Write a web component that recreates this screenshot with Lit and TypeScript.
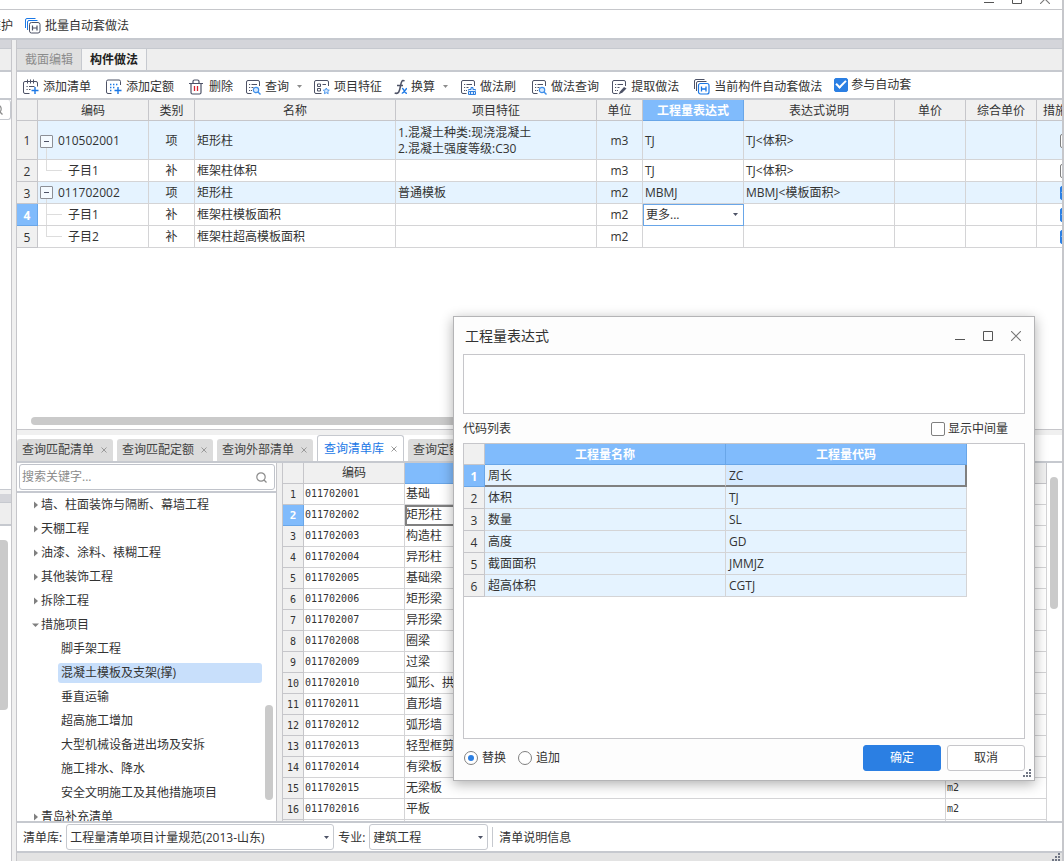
import { LitElement, html, svg, css, nothing } from "lit";
import { customElement, property, state } from "lit/decorators.js";
import { classMap } from "lit/directives/class-map.js";

const DARK = "#4d5266";
const BLUE = "#1b78e6";

const frame = svg`<path d="M6.5 14.5H3A1.5 1.5 0 0 1 1.5 13V3A1.5 1.5 0 0 1 3 1.5H13A1.5 1.5 0 0 1 14.5 3V7" fill="none" stroke=${DARK}/>`;
const lines = svg`<path d="M4 5.5H5.2M6.5 5.5H12M4 8.5H5.2M6.5 8.5H8.5M4 11.5H5.2M6 11.5H7" fill="none" stroke=${DARK}/>`;

const icons: Record<string, unknown> = {
  batch: svg`<path d="M.5 10V2A1.5 1.5 0 0 1 2 .5H10.500M2.500 12V4A1.5 1.5 0 0 1 4 2.500H12.500" fill="none" stroke=${BLUE}/>
    <rect x="4.500" y="4.500" width="10.500" height="10.500" rx="2" fill="#fff" stroke=${DARK}/><path d="M7.500 7.500V12.500M12 7.500V12.500M7.500 10H12" stroke=${DARK} stroke-width="1.200"/>`,
  list: svg`<path d="M6.500 14.500H2A1.500 1.500 0 0 1 .5 13V4A1.500 1.500 0 0 1 2 2.500H13A1.500 1.500 0 0 1 14.500 4V7.500" fill="none" stroke=${DARK}/>
    <path d="M4.500 .5V4.500M7.500 .5V4.500M10.500 .5V4.500M3.500 7.500H4.700M6 7.500H11.500M3.500 10.500H4.700M6 10.500H7.500" fill="none" stroke=${DARK}/><path d="M8.500 11.500H15.500M12 8V15" stroke=${BLUE} stroke-width="1.400"/>`,
  quota: svg`<path d="M5.500 14.500H2A1.500 1.500 0 0 1 .5 13V2.500A1.500 1.500 0 0 1 2 1H13A1.500 1.500 0 0 1 14.500 2.500V6" fill="none" stroke=${DARK}/>
    <path d="M4 5.500H5.400M7 5.500H8.400M10 5.500H11.400M4 8.500H5.400M7 8.500H8.400M4 11.500H5.400" stroke=${BLUE} stroke-width="1.400"/><path d="M8.500 11.500H15.500M12 8V15" stroke=${BLUE} stroke-width="1.400"/>`,
  trash: svg`<path d="M0 4.500H14M4 4.500V2.500A1.500 1.500 0 0 1 5.500 1H8.500A1.500 1.500 0 0 1 10 2.500V4.500M2 4.500V13.500A1.500 1.500 0 0 0 3.500 15H10.500A1.500 1.500 0 0 0 12 13.500V4.500" fill="none" stroke=${DARK} stroke-width="1.200"/>
    <path d="M5.500 7V12M8.500 7V12" stroke="#d9232e" stroke-width="1.300"/>`,
  query: svg`${frame}${lines}<circle cx="11" cy="11" r="2.700" fill="#d6e9ff" stroke="#3f8fea" stroke-width="1.200"/><path d="M13 13L15.500 15.500" stroke="#3f8fea" stroke-width="1.400"/>`,
  feature: svg`<path d="M7.500 14.500H2A1.500 1.500 0 0 1 .5 13V3A1.500 1.500 0 0 1 2 1.500H13A1.500 1.500 0 0 1 14.500 3V7M3.500 5H6.500V7.500H3.500ZM3.500 9.500H6.500V12H3.500ZM8.500 5.500H12" fill="none" stroke=${DARK}/>
    <path d="M12.300 9L13.200 10.900L15.300 11.200L13.800 12.600L14.200 14.700L12.300 13.700L10.400 14.700L10.800 12.600L9.300 11.200L11.400 10.900Z" fill="#d6e9ff" stroke="#3f8fea" stroke-width=".9"/>`,
  fx: svg`<path d="M10.500 2C8 .4 7.300 2.800 6.500 7C5.600 12 4.700 15.600 .7 14M3 6.500H9" fill="none" stroke=${DARK} stroke-width="1.500"/>
    <path d="M8 9.500C10.300 8.600 10.300 15.300 13 14M13 9.500C11.500 9.500 10 14.500 7.800 14.300" fill="none" stroke=${BLUE} stroke-width="1.400"/>`,
  brush: svg`${frame}${lines}<path d="M8.500 11.500V10.500H11V8.500H13V10.500H15.500V11.500M8.500 12.500H15.500V15.500H8.500ZM10.500 13V15M13.500 13V15" fill="#d6e9ff" stroke="#2f7fdf"/>`,
  extract: svg`${frame}${lines}<path d="M7.500 15.500L9 12.500L13 8L15.500 9.500L11.500 13.500Z" fill="${DARK}"/>`,
  auto: svg`<path d="M.5 10V2A1.5 1.5 0 0 1 2 .5H10.500M2.500 12V4A1.5 1.5 0 0 1 4 2.500H12.500" fill="none" stroke=${DARK}/>
    <rect x="4.500" y="4.500" width="10.500" height="10.500" rx="2" fill="#fff" stroke=${BLUE} stroke-width="1.200"/><path d="M7.500 7.500V12.500M12 7.500V12.500M7.500 10H12" stroke=${BLUE} stroke-width="1.300"/>`,
};

const icon = (name: string, width = 16) =>
  html`<svg class="icon" width=${width} height="16" viewBox="0 0 ${width} 16" aria-hidden="true">${icons[name]}</svg>`;
const caret = html`<svg class="caret" width="5" height="3" viewBox="0 0 5 3" aria-hidden="true"><path d="M0 0H5L2.500 3Z" fill="currentColor"/></svg>`;
const magnifier = html`<svg class="mag" width="11" height="11" viewBox="0 0 11 11" aria-hidden="true"><circle cx="5" cy="5" r="4.200" fill="none" stroke="#8c8c8c" stroke-width="1.200"/><path d="M8 8L10.500 10.500" stroke="#8c8c8c" stroke-width="1.300"/></svg>`;
const grip = html`<svg class="grip" width="8" height="8" viewBox="0 0 8 8" aria-hidden="true"><path d="M6 0h2v2H6zM3 3h2v2H3zM6 3h2v2H6zM0 6h2v2H0zM3 6h2v2H3zM6 6h2v2H6z" fill="#707684"/></svg>`;
const windowButtons = html`<div class="winbtns">
  <button aria-label="最小化"><svg width="10" height="10" viewBox="0 0 10 10"><path d="M0 8.500H10" stroke="#555"/></svg></button>
  <button aria-label="最大化"><svg width="10" height="10" viewBox="0 0 10 10"><path d="M.5 .5H9.500V9.500H.5Z" fill="none" stroke="#555"/></svg></button>
  <button aria-label="关闭"><svg width="10" height="10" viewBox="0 0 10 10"><path d="M0 0L10 10M10 0L0 10" stroke="#777" stroke-width="1.100"/></svg></button>
</div>`;

const shared = css`
  :host {
    font: 12px/16px "Open Sans", "Noto Sans CJK SC", sans-serif;
    color: #333;
  }
  * { box-sizing: border-box; }
  button, input, select, textarea { font: inherit; color: inherit; margin: 0; }
  button { border: 0; padding: 0; background: none; white-space: nowrap; }
  svg { display: block; flex: none; }
  label { display: flex; align-items: center; gap: 3px; white-space: nowrap; }
  input[type="checkbox"] {
    appearance: none; flex: none; display: grid; place-items: center;
    width: 14px; height: 14px; border: 1px solid #808080; border-radius: 2px; background: #fff;
  }
  input[type="checkbox"]:checked { background: #2b7fe3; border-color: #2b7fe3; }
  input[type="checkbox"]:checked::after {
    content: ""; width: 8px; height: 4px; margin-bottom: 3px;
    border: solid #fff; border-width: 0 0 2px 2px; transform: rotate(-45deg);
  }
  input[type="radio"] {
    appearance: none; flex: none; display: grid; place-items: center;
    width: 14px; height: 14px; border: 1px solid #808080; border-radius: 50%; background: #fff;
  }
  input[type="radio"]:checked::after {
    content: ""; width: 6px; height: 6px; border-radius: 50%; background: #2b7fe3;
  }
  .winbtns { display: flex; gap: 18px; }
  table { border-collapse: separate; border-spacing: 0; table-layout: fixed; }
  th, td {
    height: 22px; padding: 0 2px; text-align: left; overflow: hidden; white-space: nowrap;
    border: solid #d4d4d6; border-width: 0 1px 1px 0; font-weight: 400;
  }
  thead th { height: 21px; padding-top: 2px; text-align: center; background: #f0f0f0; border-color: #c6c6ca; }
  tbody th { text-align: center; background: #f0f0f0; border-color: #c6c6ca; padding: 2px 0 0; }
  thead th.on, tbody th.on { background: #80bbfc; border-color: #69a6e8; color: #fff; font-weight: 700; }
  .mid { text-align: center; }
`;

interface BillRow {
  code: string;
  level: 0 | 1;
  last?: boolean;
  kind: string;
  name: string;
  feature?: string[];
  unit: string;
  expr?: string;
  note?: string;
  measure?: boolean | null;
}

const billRows: BillRow[] = [
  { code: "010502001", level: 0, kind: "项", name: "矩形柱", feature: ["1.混凝土种类:现浇混凝土", "2.混凝土强度等级:C30"], unit: "m3", expr: "TJ", note: "TJ<体积>", measure: false },
  { code: "子目1", level: 1, last: true, kind: "补", name: "框架柱体积", unit: "m3", expr: "TJ", note: "TJ<体积>", measure: false },
  { code: "011702002", level: 0, kind: "项", name: "矩形柱", feature: ["普通模板"], unit: "m2", expr: "MBMJ", note: "MBMJ<模板面积>", measure: true },
  { code: "子目1", level: 1, kind: "补", name: "框架柱模板面积", unit: "m2", measure: true },
  { code: "子目2", level: 1, last: true, kind: "补", name: "框架柱超高模板面积", unit: "m2", measure: true },
];

@customElement("bill-grid")
export class BillGrid extends LitElement {
  static styles = [shared, css`
    :host { display: block; overflow: hidden; position: relative; background: #fff; }
    table { width: 1081px; }
    .c-no { width: 21px; } .c-code { width: 111px; } .c-s { width: 46px; } .c-m { width: 201px; }
    .c-expr { width: 101px; } .c-note { width: 151px; } .c-price { width: 71px; } .c-last { width: 61px; }
    tr.bill td { background-color: #e5f3ff; }
    tr.tall td { height: 39px; padding-top: 2px; }
    td.code { background-repeat: no-repeat; background-image: linear-gradient(#ddd, #ddd); background-size: 1px 50%; background-position: 8px 100%; }
    td.child { padding-left: 30px; background-image: linear-gradient(#ddd, #ddd), linear-gradient(#ddd, #ddd); background-size: 1px 100%, 16px 1px; background-position: 8px 0, 8px 50%; }
    td.child.last { background-size: 1px 50%, 16px 1px; }
    .node { display: flex; align-items: center; gap: 5px; }
    .toggle { width: 13px; height: 13px; display: grid; place-items: center; border: 1px solid #8c8f96; border-radius: 1px; background: #f4faff; }
    .toggle::after { content: ""; width: 5px; height: 1px; background: #4d5266; }
    td.edit { padding: 0; border-color: #69a6e8; outline: 1px solid #69a6e8; outline-offset: -1px; overflow: visible; }
    .pick { display: grid; align-items: center; }
    .pick > * { grid-area: 1 / 1; }
    .pick select { appearance: none; border: 0; background: none; height: 21px; width: 100%; padding: 0 3px; }
    .pick .caret { justify-self: end; margin-right: 5px; pointer-events: none; color: #4d5266; }
    td input { margin: 0 auto; }
    .thumb { position: absolute; left: 14px; bottom: 4px; width: 60%; height: 8px; border-radius: 4px; background: #cacaca; }
  `];

  render() {
    return html`
      <table>
        <colgroup>
          <col class="c-no"><col class="c-code"><col class="c-s"><col class="c-m"><col class="c-m"><col class="c-s">
          <col class="c-expr"><col class="c-note"><col class="c-price"><col class="c-price"><col class="c-last">
        </colgroup>
        <thead><tr>
          <th></th><th>编码</th><th>类别</th><th>名称</th><th>项目特征</th><th>单位</th>
          <th class="on">工程量表达式</th><th>表达式说明</th><th>单价</th><th>综合单价</th><th>措施项目</th>
        </tr></thead>
        <tbody>${billRows.map((r, i) => html`
          <tr class=${classMap({ bill: r.level === 0, tall: (r.feature?.length ?? 0) > 1 })}>
            <th class=${classMap({ on: i === 3 })}>${i + 1}</th>
            <td class=${classMap({ code: true, child: r.level === 1, last: !!r.last })}>
              ${r.level === 0 ? html`<div class="node"><button class="toggle" aria-label="折叠"></button>${r.code}</div>` : r.code}
            </td>
            <td class="mid">${r.kind}</td>
            <td>${r.name}</td>
            <td>${r.feature?.map((f) => html`<div>${f}</div>`)}</td>
            <td class="mid">${r.unit}</td>
            ${i === 3
              ? html`<td class="edit"><div class="pick"><select aria-label="工程量表达式"><option>更多...</option></select>${caret}</div></td>`
              : html`<td>${r.expr}</td>`}
            <td>${r.note}</td><td></td><td></td>
            <td><input type="checkbox" aria-label="措施项目" .checked=${!!r.measure}></td>
          </tr>`)}
        </tbody>
      </table>
      <div class="thumb"></div>`;
  }
}

const tree = [
  { text: "墙、柱面装饰与隔断、幕墙工程" }, { text: "天棚工程" }, { text: "油漆、涂料、裱糊工程" },
  { text: "其他装饰工程" }, { text: "拆除工程" }, { text: "措施项目", open: true },
  { text: "脚手架工程", leaf: true }, { text: "混凝土模板及支架(撑)", leaf: true, on: true },
  { text: "垂直运输", leaf: true }, { text: "超高施工增加", leaf: true },
  { text: "大型机械设备进出场及安拆", leaf: true }, { text: "施工排水、降水", leaf: true },
  { text: "安全文明施工及其他措施项目", leaf: true }, { text: "青岛补充清单" },
] as { text: string; open?: boolean; leaf?: boolean; on?: boolean }[];

const library = ["基础", "矩形柱", "构造柱", "异形柱", "基础梁", "矩形梁", "异形梁", "圈梁", "过梁",
  "弧形、拱形梁", "直形墙", "弧形墙", "轻型框剪墙", "有梁板", "无梁板", "平板", "拱板"];

@customElement("library-pane")
export class LibraryPane extends LitElement {
  @state() private selected = 1;

  static styles = [shared, css`
    :host { display: flex; min-height: 0; background: #f0f0f0; overflow: hidden; }
    .nav { width: 260px; flex: none; display: flex; flex-direction: column; background: #fff; border-right: 1px solid #c6c6ca; position: relative; overflow: hidden; }
    .search { flex: none; padding: 1px 1px 1px 2px; border-bottom: 2px solid #c6c9d0; height: 30px; }
    .box { display: flex; align-items: center; height: 26px; border: 1px solid #c0c3ca; border-radius: 3px; padding: 0 7px 0 2px; }
    .box input { flex: 1; min-width: 0; border: 0; outline: 0; padding: 0; background: none; }
    .box input::placeholder { color: #8c8c8c; opacity: 1; }
    ul { list-style: none; margin: 0; padding: 0; flex: 1; overflow: hidden; }
    li { display: flex; align-items: center; height: 24px; gap: 2px; padding-left: 15px; white-space: nowrap; }
    li span { padding: 2px 0; flex: 1; }
    li.leaf { padding: 0 14px 0 41px; }
    li.leaf span { padding: 2px 3px; border-radius: 3px; }
    li.on span { background: #c8dffb; }
    .thumb { position: absolute; border-radius: 4px; background: #cacaca; width: 8px; }
    .nav .thumb { right: 3px; bottom: 21px; height: 95px; }
    .list { flex: 1; min-width: 0; margin-left: 5px; border-left: 1px solid #c6c6ca; background: #fff; padding-right: 15px; position: relative; overflow: hidden; }
    .list .thumb { right: 4px; top: 14px; height: 132px; }
    table { width: 100%; }
    .c-no { width: 21px; } .c-code { width: 101px; } .c-unit { width: 101px; }
    thead th { padding-top: 0; }
    td, tbody th { height: 21px; line-height: 14px; }
    td { padding-left: 1px; }
    tbody th, td.num { font-family: "DejaVu Sans Mono", monospace; font-size: 10px; }
    td.num { padding-bottom: 1px; }
    tbody th.on { font-size: 11px; }
    td.cur { outline: 2px solid #808080; outline-offset: -2px; }
  `];

  render() {
    return html`
      <div class="nav">
        <div class="search"><div class="box"><input type="text" aria-label="搜索关键字" placeholder="搜索关键字...">${magnifier}</div></div>
        <ul>${tree.map((n) => html`
          <li class=${classMap({ leaf: !!n.leaf, on: !!n.on })}>
            ${n.leaf ? nothing : html`<svg width="7" height="8" viewBox="0 0 7 8"><path d=${n.open ? "M0 2.500H7L3.500 6Z" : "M2 0.500L6 4L2 7.500Z"} fill="#808080"/></svg>`}
            <span>${n.text}</span>
          </li>`)}
        </ul>
        <div class="thumb"></div>
      </div>
      <div class="list">
        <table>
          <colgroup><col class="c-no"><col class="c-code"><col><col class="c-unit"></colgroup>
          <thead><tr><th></th><th>编码</th><th class="on">名称</th><th>单位</th></tr></thead>
          <tbody>${library.map((name, i) => html`
            <tr @click=${() => (this.selected = i)}>
              <th class=${classMap({ on: i === this.selected })}>${i + 1}</th>
              <td class="num">0117020${String(i + 1).padStart(2, "0")}</td>
              <td class=${classMap({ cur: i === this.selected })}>${name}</td>
              <td class="num">m2</td>
            </tr>`)}
          </tbody>
        </table>
        <div class="thumb"></div>
      </div>`;
  }
}

const codes = [["周长", "ZC"], ["体积", "TJ"], ["数量", "SL"], ["高度", "GD"], ["截面面积", "JMMJZ"], ["超高体积", "CGTJ"]];

@customElement("expression-dialog")
export class ExpressionDialog extends LitElement {
  @property({ type: Number }) selected = 0;

  static styles = [shared, css`
    :host { display: block; background: #fdfdfd; border: 1px solid #b4b4b6; box-shadow: 0 3px 12px rgba(0, 0, 0, 0.32); padding: 0 9px 9px; position: relative; }
    header { display: flex; align-items: center; justify-content: space-between; height: 37px; padding: 0 4px 0 2px; }
    h2 { margin: 0; font-size: 14px; line-height: 20px; font-weight: 400; }
    textarea { display: block; width: 100%; height: 60px; resize: none; border: 1px solid #c6c6ca; border-radius: 0; background: #fff; outline: 0; }
    .caption { display: flex; align-items: center; justify-content: space-between; height: 29px; padding-right: 17px; }
    .frame { height: 296px; border: 1px solid #c6c6ca; background: #fff; }
    table { width: 503px; }
    .c-no { width: 21px; }
    td { background: #e5f3ff; padding: 0 3px; }
    tr.cur td { border-bottom: 2px solid #808080; padding-top: 1px; }
    tr.cur td:last-child { background: #d6eaff; border-right: 2px solid #808080; }
    footer { display: flex; align-items: center; gap: 12px; padding: 6px 0 0 1px; }
    footer label { gap: 4px; }
    .space { flex: 1; }
    .acts { display: flex; gap: 6px; }
    .acts button { width: 78px; height: 26px; border-radius: 3px; border: 1px solid #c6c6ca; background: #fff; }
    .acts .ok { background: #2b7fe3; border-color: #2b7fe3; color: #fff; }
    .grip { position: absolute; right: 3px; bottom: 3px; }
  `];

  render() {
    return html`
      <header><h2>工程量表达式</h2>${windowButtons}</header>
      <textarea aria-label="工程量表达式"></textarea>
      <div class="caption"><span>代码列表</span><label><input type="checkbox">显示中间量</label></div>
      <div class="frame">
        <table>
          <colgroup><col class="c-no"><col><col></colgroup>
          <thead><tr><th></th><th class="on">工程量名称</th><th class="on">工程量代码</th></tr></thead>
          <tbody>${codes.map(([name, code], i) => html`
            <tr class=${classMap({ cur: i === this.selected })} @click=${() => (this.selected = i)}>
              <th class=${classMap({ on: i === this.selected })}>${i + 1}</th><td>${name}</td><td>${code}</td>
            </tr>`)}
          </tbody>
        </table>
      </div>
      <footer>
        <label><input type="radio" name="mode" checked>替换</label>
        <label><input type="radio" name="mode">追加</label>
        <div class="space"></div>
        <div class="acts"><button class="ok">确定</button><button>取消</button></div>
      </footer>
      ${grip}`;
  }
}

const tools: { icon: string; text: string; menu?: boolean; wide?: boolean; size?: number }[] = [
  { icon: "list", text: "添加清单", wide: true }, { icon: "quota", text: "添加定额", wide: true },
  { icon: "trash", text: "删除" }, { icon: "query", text: "查询", menu: true },
  { icon: "feature", text: "项目特征" }, { icon: "fx", text: "换算", menu: true, size: 13 },
  { icon: "brush", text: "做法刷", wide: true }, { icon: "query", text: "做法查询" },
  { icon: "extract", text: "提取做法", wide: true }, { icon: "auto", text: "当前构件自动套做法" },
];
const queryTabs = ["查询匹配清单", "查询匹配定额", "查询外部清单", "查询清单库", "查询定额库"];

@customElement("app-root")
export class AppRoot extends LitElement {
  static styles = [shared, css`
    :host { display: block; position: relative; height: 100vh; overflow: hidden; background: #fff; }
    .app { display: flex; flex-direction: column; height: 100%; border-right: 2px solid #c6c7cb; }
    .title { flex: none; display: flex; justify-content: flex-end; align-items: flex-end; height: 10px; padding: 0 12px 5px 0; border-bottom: 1px solid #c6c7cb; overflow: hidden; }
    .ribbon { flex: none; display: flex; align-items: center; height: 30px; gap: 12px; border-bottom: 2px solid #c6c9cf; padding-top: 3px; }
    .ribbon button { display: flex; align-items: center; gap: 4px; }
    .ribbon .cut { width: 13px; justify-content: flex-end; overflow: hidden; }
    .body { flex: 1; min-height: 0; display: flex; }
    .side { flex: none; width: 12px; display: flex; flex-direction: column; border-right: 1px solid #c6c6ca; background: #fff; overflow: hidden; }
    .band { flex: none; height: 9px; background: #d4d5da; border-bottom: 1px solid #c6c9cf; }
    .strip { flex: none; height: 23px; background: #eee; border-bottom: 2px solid #c6c9cf; }
    .blank { flex: none; height: 28px; border-bottom: 2px solid #c6c9cf; }
    .find { flex: none; height: 20px; border: solid #c6c9cf; border-width: 0 1px 1px 0; border-radius: 0 3px 3px 0; display: flex; align-items: center; justify-content: flex-end; padding-right: 7px; overflow: hidden; }
    .fill { flex: 369 1 0; border-bottom: 1px solid #c6c9cf; }
    .split { flex: none; height: 4px; background: #f0f0f0; }
    .side .foot { flex: 321 1 0; padding-top: 14px; }
    .side .foot div { width: 8px; height: 53%; background: #cacaca; border-radius: 0 4px 4px 0; }
    .gutter { flex: none; width: 4px; background: #f0f0f0; }
    .main { flex: 1; min-width: 0; display: flex; flex-direction: column; border-left: 1px solid #c6c6ca; }
    .views { flex: none; display: flex; height: 23px; background: #eee; border-bottom: 2px solid #c6c9cf; }
    .views button { padding: 0 8px; border-right: 1px solid #c6c9cf; }
    .views .off { background: #e0e0e0; color: #8c8c8c; }
    .views .on { font-weight: 700; color: #222; background: #f4f4f4; }
    .tools { flex: none; display: flex; align-items: center; gap: 12px; height: 28px; padding: 3px 0 0 6px; border-bottom: 2px solid #c6c9cf; overflow: hidden; }
    .tools button { display: flex; align-items: center; gap: 4px; }
    .tools .wide { padding-right: 3px; }
    .tools .caret { margin-left: 4px; color: #8c8c8c; }
    .tools label { padding-bottom: 4px; }
    bill-grid { flex: 329 1 0; min-height: 0; border-bottom: 1px solid #c6c6ca; }
    .rule { flex: none; height: 5px; background: #f0f0f0; }
    .tabs { flex: none; display: flex; align-items: flex-end; gap: 4px; height: 28px; border-bottom: 2px solid #c6c9cf; overflow: hidden; }
    .tabs button { display: flex; align-items: center; gap: 7px; height: 22px; padding: 0 6px 0 5px; background: #dcdcdc; border-radius: 3px 3px 0 0; color: #444; }
    .tabs .on { height: 26px; padding: 0 6px; background: #fff; border: 1px solid #c6c9cf; border-bottom: 0; color: #1b78e6; }
    library-pane { flex: 358 1 0; }
    .bar { flex: none; display: flex; align-items: center; height: 32px; gap: 4px; padding: 0 6px; border: solid #c6c9cf; border-width: 2px 0; }
    .bar label { padding-top: 2px; }
    .pick { display: grid; align-items: center; }
    .pick > * { grid-area: 1 / 1; }
    .pick select { appearance: none; background: #fff; border: 1px solid #c6c9cf; border-radius: 3px; height: 26px; width: 100%; padding: 1px 3px 0; }
    .pick .caret { justify-self: end; margin-right: 5px; pointer-events: none; color: #4d5266; }
    .lib { width: 268px; } .major { width: 119px; }
    .info { border-left: 1px solid #c6c9cf; height: 20px; padding: 2px 0 0 6px; }
    .status { flex: none; height: 8px; background: #e3e3e3; display: flex; justify-content: flex-end; padding-right: 2px; }
    expression-dialog { position: absolute; top: 316px; right: 29px; width: 582px; }
  `];

  render() {
    return html`
      <div class="app">
        <div class="title">${windowButtons}</div>
        <div class="ribbon">
          <button class="cut">维护</button>
          <button>${icon("batch")}批量自动套做法</button>
        </div>
        <div class="body">
          <div class="side">
            <div class="band"></div><div class="strip"></div><div class="blank"></div>
            <div class="find">${magnifier}</div><div class="fill"></div>
            <div class="split"></div><div class="band"></div><div class="strip"></div>
            <div class="foot"><div></div></div>
          </div>
          <div class="gutter"></div>
          <div class="main">
            <div class="band"></div>
            <div class="views"><button class="off">截面编辑</button><button class="on">构件做法</button></div>
            <div class="tools">
              ${tools.map((t) => html`<button class=${classMap({ wide: !!t.wide })}>${icon(t.icon, t.size)}${t.text}${t.menu ? caret : nothing}</button>`)}
              <label><input type="checkbox" checked>参与自动套</label>
            </div>
            <bill-grid></bill-grid>
            <div class="rule"></div>
            <div class="tabs">${queryTabs.map((t, i) => html`
              <button class=${classMap({ on: i === 3 })}>${t}<svg width="6" height="6" viewBox="0 0 6 6"><path d="M.5 .5L5.500 5.500M5.500 .5L.5 5.500" stroke="#999"/></svg></button>`)}
            </div>
            <library-pane></library-pane>
            <div class="bar">
              <label for="lib">清单库:</label>
              <div class="pick lib"><select id="lib"><option>工程量清单项目计量规范(2013-山东)</option></select>${caret}</div>
              <label for="major">专业:</label>
              <div class="pick major"><select id="major"><option>建筑工程</option></select>${caret}</div>
              <button class="info">清单说明信息</button>
            </div>
            <div class="status">${grip}</div>
          </div>
        </div>
      </div>
      <expression-dialog role="dialog" aria-label="工程量表达式"></expression-dialog>`;
  }
}
